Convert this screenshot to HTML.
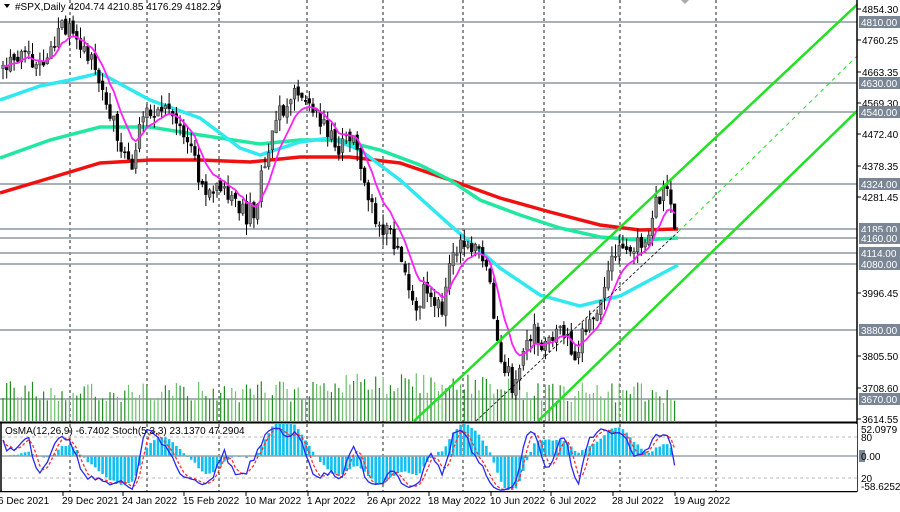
<!DOCTYPE html>
<html><head><meta charset="utf-8">
<style>
html,body{margin:0;padding:0;background:#fff;width:900px;height:512px;overflow:hidden;font-family:"Liberation Sans",sans-serif;}
svg{display:block}
text{font-family:"Liberation Sans",sans-serif;font-size:10px;fill:#000}
</style></head><body>
<svg id="s" width="900" height="512" xmlns="http://www.w3.org/2000/svg"></svg>
<script>
(function(){
var S=[];
function add(s){S.push(s);}
var a=1234567;function rnd(){a^=a<<13;a^=a>>>17;a^=a<<5;return ((a>>>0)%100000)/100000;}
[70,147,219,307,383,463,544,620,716].forEach(function(x){
 add('<line x1="'+x+'" y1="0" x2="'+x+'" y2="492" stroke="#222" stroke-width="1" stroke-dasharray="3,3"/>');});
var lv=[[22,'4810.00'],[83,'4630.00'],[112,'4540.00'],[184,'4324.00'],[229,'4185.00'],[238,'4160.00'],[253,'4114.00'],[264,'4080.00'],[330,'3880.00'],[399,'3670.00']];
lv.forEach(function(l){add('<line x1="0" y1="'+l[0]+'" x2="857" y2="'+l[0]+'" stroke="#8c96a0" stroke-width="1.5"/>');});
var kp=[[0,70],[15,62],[30,58],[45,65],[60,30],[68,25],[80,40],[90,62],[100,75],[110,110],[120,140],[130,170],[140,125],[150,108],[160,118],[170,112],[180,125],[190,140],[200,185],[208,200],[220,180],[232,200],[245,215],[255,210],[265,160],[275,120],[290,100],[300,88],[310,105],[320,120],[330,140],[340,145],[350,138],[360,160],[370,200],[380,225],[392,240],[405,275],[415,310],[425,285],[433,295],[442,310],[450,270],[458,245],[470,242],[480,248],[488,262],[495,320],[500,355],[507,372],[512,385],[520,368],[527,345],[533,330],[540,348],[550,340],[560,328],[568,345],[575,352],[582,335],[590,315],[600,302],[606,285],[612,258],[622,250],[632,250],[642,245],[650,222],[658,195],[665,190],[672,205],[678,229]];
function ip(x){for(var i=1;i<kp.length;i++){if(x<=kp[i][0]){var p=kp[i-1],q=kp[i];var t=(x-p[0])/(q[0]-p[0]);return p[1]+t*(q[1]-p[1]);}}return kp[kp.length-1][1];}
var N=183,bars=[];var prev=ip(0);
for(var i=0;i<N;i++){var x=3+i*3.69;var c=ip(x)+(rnd()-0.5)*20;if(i==N-1)c=229;var o=prev+(rnd()-0.5)*6;
 var h=Math.min(o,c)-rnd()*12,l=Math.max(o,c)+rnd()*12;bars.push({x:x,o:o,c:c,h:h,l:l});prev=c;}
bars.forEach(function(b,i){var hgt=18+rnd()*22+ (i>85&&i<140?8:0);
 var col=rnd()<0.5?'#1e8c1e':'#6cc06c';
 add('<line x1="'+b.x.toFixed(1)+'" y1="421" x2="'+b.x.toFixed(1)+'" y2="'+(421-hgt).toFixed(1)+'" stroke="'+col+'" stroke-width="1.2"/>');});
function pl(pts,col,w,extra){add('<polyline fill="none" stroke="'+col+'" stroke-width="'+w+'" '+(extra||'')+' points="'+pts.map(function(p){return p[0]+','+p[1]}).join(' ')+'"/>');}
pl([[0,193],[50,178],[100,163],[150,160],[200,160],[250,162],[300,157],[350,157],[400,163],[450,180],[500,198],[550,212],[600,225],[640,230],[678,229]],'#f01010',3.5);
pl([[0,158],[50,140],[100,127],[150,127],[200,135],[260,144],[300,140],[340,140],[380,150],[420,165],[450,180],[480,200],[520,215],[560,228],[600,237],[640,240],[678,238]],'#20e8a0',3.5);
pl([[0,100],[40,86],[70,80],[100,73],[150,100],[200,118],[240,148],[260,155],[300,142],[330,138],[360,150],[400,180],[450,225],[500,268],[540,295],[580,306],[620,296],[650,280],[678,265]],'#30e8f0',3.5);
bars.forEach(function(b){var bull=b.c<b.o;var top=Math.min(b.o,b.c),hh=Math.max(1,Math.abs(b.o-b.c));
 add('<line x1="'+b.x.toFixed(1)+'" y1="'+b.h.toFixed(1)+'" x2="'+b.x.toFixed(1)+'" y2="'+b.l.toFixed(1)+'" stroke="#000" stroke-width="1"/>');
 add('<rect x="'+(b.x-1.3).toFixed(1)+'" y="'+top.toFixed(1)+'" width="2.6" height="'+hh.toFixed(1)+'" fill="'+(bull?'#8a8a8a':'#000')+'" stroke="'+(bull?'#333':'#000')+'" stroke-width="0.6"/>');});
var e=bars[0].c,mp=[];bars.forEach(function(b){e=e+(b.c-e)*0.22;mp.push([b.x.toFixed(1),e.toFixed(1)]);});
pl(mp,'#ff20ff',1.8);
add('<line x1="414" y1="421" x2="862" y2="0" stroke="#22e022" stroke-width="2.5"/>');
add('<line x1="538" y1="421" x2="858" y2="110" stroke="#22e022" stroke-width="2.5"/>');
add('<line x1="476" y1="421" x2="678" y2="232" stroke="#000" stroke-width="0.8" stroke-dasharray="3,2"/>');
add('<line x1="678" y1="232" x2="858" y2="55" stroke="#22e022" stroke-width="1" stroke-dasharray="4,4"/>');
add('<rect x="857" y="0" width="43" height="512" fill="#fff"/>');
add('<line x1="857" y1="0" x2="857" y2="492" stroke="#000" stroke-width="1.5"/>');
add('<line x1="0" y1="422.5" x2="857" y2="422.5" stroke="#000" stroke-width="2"/>');
add('<line x1="0" y1="491.5" x2="857" y2="491.5" stroke="#000" stroke-width="1.5"/>');
add('<line x1="1" y1="423" x2="1" y2="492" stroke="#000" stroke-width="1.5"/>');
add('<rect x="2" y="424" width="855" height="67" fill="#fff"/>');
[70,147,219,307,383,463,544,620,716].forEach(function(x){add('<line x1="'+x+'" y1="424" x2="'+x+'" y2="491" stroke="#222" stroke-dasharray="3,3"/>');});
add('<line x1="2" y1="437" x2="857" y2="437" stroke="#bbb" stroke-dasharray="3,3"/>');
add('<line x1="2" y1="478" x2="857" y2="478" stroke="#bbb" stroke-dasharray="3,3"/>');
var pr=bars.map(function(b){return (4810-(b.c-22)/0.3305);});
var e12=pr[0],e26=pr[0],macd=[];pr.forEach(function(p){e12+= (p-e12)*2/13;e26+=(p-e26)*2/27;macd.push(e12-e26);});
var sig=macd.map(function(m,i){var s=0,n=0;for(var k=Math.max(0,i-8);k<=i;k++){s+=macd[k];n++;}return s/n;});
bars.forEach(function(b,i){var o=(macd[i]-sig[i])*0.75;o=Math.max(-34,Math.min(33,o));
 add('<rect x="'+(b.x-1.3).toFixed(1)+'" y="'+(o>0?456-o:456).toFixed(1)+'" width="2.6" height="'+Math.abs(o).toFixed(1)+'" fill="#10c0f0"/>');});
add('<line x1="2" y1="456" x2="857" y2="456" stroke="#98a2ac" stroke-width="1.5"/>');
var raw=bars.map(function(b,i){var hh=1e9,ll=-1e9;for(var k=Math.max(0,i-4);k<=i;k++){hh=Math.min(hh,bars[k].h);ll=Math.max(ll,bars[k].l);}return (ll-b.c)/(ll-hh||1)*100;});
function sma(arr,n){return arr.map(function(v,i){var s=0,c=0;for(var k=Math.max(0,i-n+1);k<=i;k++){s+=arr[k];c++;}return s/c;});}
var K=sma(raw,3),D=sma(K,3);
function sy(v){return (478-(v-20)*41/60).toFixed(1);}
pl(bars.map(function(b,i){return [b.x.toFixed(1),sy(D[i])];}),'#ff3030',1.3,'stroke-dasharray="3,2"');
pl(bars.map(function(b,i){return [b.x.toFixed(1),sy(K[i])];}),'#2828f0',1.3);
add('<text x="5" y="434">OsMA(12,26,9) -6.7402   Stoch(5,3,3) 23.1370 47.2904</text>');
add('<polygon points="4,4 10,4 7,8" fill="#000"/>');
add('<text x="15" y="10">#SPX,Daily  4204.74 4210.85 4176.29 4182.29</text>');
add('<polygon points="681,0 689,0 685,4" fill="#aaa"/>');
var tk=[[9,'4854.30'],[40,'4760.25'],[72,'4663.35'],[103,'4569.30'],[134,'4472.40'],[166,'4378.35'],[197,'4281.45'],[293,'3996.45'],[356,'3805.50'],[388,'3708.60'],[419,'3614.55']];
tk.forEach(function(t){add('<line x1="857" y1="'+t[0]+'" x2="861" y2="'+t[0]+'" stroke="#000"/>');add('<text x="862" y="'+(t[0]+4)+'">'+t[1]+'</text>');});
lv.forEach(function(l){add('<rect x="859" y="'+(l[0]-6)+'" width="41" height="12" fill="#7a8694"/>');add('<text x="861" y="'+(l[0]+4)+'" style="fill:#fff">'+l[1]+'</text>');});
add('<text x="861" y="433">52.0979</text><text x="861" y="441">80</text><rect x="859" y="450" width="6" height="12" fill="#7a8694"/><text x="861" y="460">0.00</text><text x="861" y="482">20</text><text x="861" y="490">-58.6252</text>');
[[-2,'6 Dec 2021'],[62,'29 Dec 2021'],[122,'24 Jan 2022'],[183,'15 Feb 2022'],[245,'10 Mar 2022'],[307,'1 Apr 2022'],[367,'26 Apr 2022'],[428,'18 May 2022'],[490,'10 Jun 2022'],[550,'6 Jul 2022'],[612,'28 Jul 2022'],[674,'19 Aug 2022']].forEach(function(d){
 add('<line x1="'+(d[0]+1)+'" y1="492" x2="'+(d[0]+1)+'" y2="496" stroke="#000"/>');add('<text x="'+d[0]+'" y="504">'+d[1]+'</text>');});
document.getElementById('s').innerHTML=S.join('');
})();
</script>
</body></html>
